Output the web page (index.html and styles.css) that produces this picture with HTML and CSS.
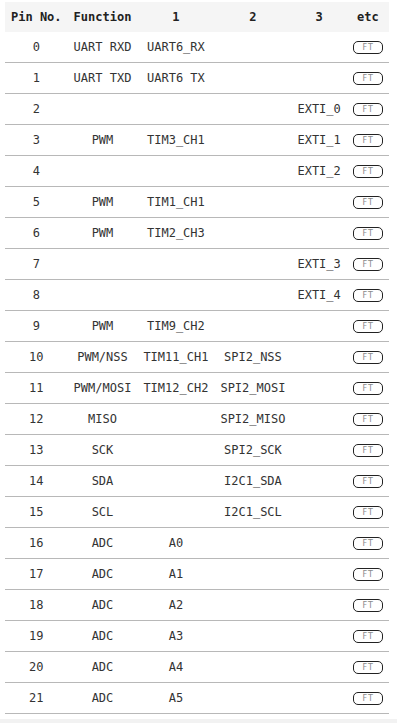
FILE: index.html
```html
<!DOCTYPE html>
<html>
<head>
<meta charset="utf-8">
<link rel="stylesheet" href="styles.css">
</head>
<body>
<div class="wrap">
<table class="pins">
<thead>
<tr><th>Pin No.</th><th>Function</th><th>1</th><th>2</th><th>3</th><th>etc</th></tr>
</thead>
<tbody>
<tr><td>0</td><td>UART RXD</td><td>UART6_RX</td><td></td><td></td><td><span class="ft">FT</span></td></tr>
<tr><td>1</td><td>UART TXD</td><td>UART6 TX</td><td></td><td></td><td><span class="ft">FT</span></td></tr>
<tr><td>2</td><td></td><td></td><td></td><td>EXTI_0</td><td><span class="ft">FT</span></td></tr>
<tr><td>3</td><td>PWM</td><td>TIM3_CH1</td><td></td><td>EXTI_1</td><td><span class="ft">FT</span></td></tr>
<tr><td>4</td><td></td><td></td><td></td><td>EXTI_2</td><td><span class="ft">FT</span></td></tr>
<tr><td>5</td><td>PWM</td><td>TIM1_CH1</td><td></td><td></td><td><span class="ft">FT</span></td></tr>
<tr><td>6</td><td>PWM</td><td>TIM2_CH3</td><td></td><td></td><td><span class="ft">FT</span></td></tr>
<tr><td>7</td><td></td><td></td><td></td><td>EXTI_3</td><td><span class="ft">FT</span></td></tr>
<tr><td>8</td><td></td><td></td><td></td><td>EXTI_4</td><td><span class="ft">FT</span></td></tr>
<tr><td>9</td><td>PWM</td><td>TIM9_CH2</td><td></td><td></td><td><span class="ft">FT</span></td></tr>
<tr><td>10</td><td>PWM/NSS</td><td>TIM11_CH1</td><td>SPI2_NSS</td><td></td><td><span class="ft">FT</span></td></tr>
<tr><td>11</td><td>PWM/MOSI</td><td>TIM12_CH2</td><td>SPI2_MOSI</td><td></td><td><span class="ft">FT</span></td></tr>
<tr><td>12</td><td>MISO</td><td></td><td>SPI2_MISO</td><td></td><td><span class="ft">FT</span></td></tr>
<tr><td>13</td><td>SCK</td><td></td><td>SPI2_SCK</td><td></td><td><span class="ft">FT</span></td></tr>
<tr><td>14</td><td>SDA</td><td></td><td>I2C1_SDA</td><td></td><td><span class="ft">FT</span></td></tr>
<tr><td>15</td><td>SCL</td><td></td><td>I2C1_SCL</td><td></td><td><span class="ft">FT</span></td></tr>
<tr><td>16</td><td>ADC</td><td>A0</td><td></td><td></td><td><span class="ft">FT</span></td></tr>
<tr><td>17</td><td>ADC</td><td>A1</td><td></td><td></td><td><span class="ft">FT</span></td></tr>
<tr><td>18</td><td>ADC</td><td>A2</td><td></td><td></td><td><span class="ft">FT</span></td></tr>
<tr><td>19</td><td>ADC</td><td>A3</td><td></td><td></td><td><span class="ft">FT</span></td></tr>
<tr><td>20</td><td>ADC</td><td>A4</td><td></td><td></td><td><span class="ft">FT</span></td></tr>
<tr><td>21</td><td>ADC</td><td>A5</td><td></td><td></td><td><span class="ft">FT</span></td></tr>
</tbody>
</table>
<div class="footer"></div>
</div>
</body>
</html>
```
FILE: styles.css
```css
html, body {
  margin: 0;
  padding: 0;
  background: #ffffff;
}
.wrap {
  padding: 2px 0 0 5px;
}
.pins {
  border-collapse: collapse;
  font-family: "DejaVu Sans Mono", monospace;
  font-size: 12px;
  color: #333333;
}
.pins th {
  background: #f5f5f5;
  font-weight: bold;
  color: #222222;
  height: 30px;
  padding: 0 6px;
  text-align: center;
  white-space: nowrap;
}
.pins td {
  height: 30px;
  padding: 0 6px;
  text-align: center;
  white-space: nowrap;
  border-bottom: 1px solid #b8b8b8;
}
.ft {
  display: inline-block;
  box-sizing: border-box;
  width: 30px;
  height: 13px;
  border: 1px solid #222222;
  border-radius: 5px;
  font-family: "DejaVu Sans", sans-serif;
  font-size: 8px;
  letter-spacing: 1px;
  text-indent: 1px;
  line-height: 11px;
  color: #8a8a8a;
  vertical-align: middle;
  text-align: center;
}
.footer {
  margin-top: 5px;
  margin-left: -5px;
  height: 10px;
  background: #f2f2f2;
}
```
